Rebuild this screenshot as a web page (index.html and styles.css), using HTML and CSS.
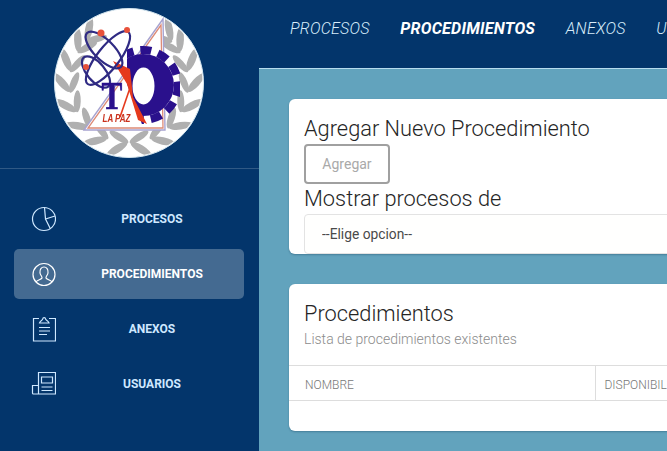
FILE: index.html
```html
<!DOCTYPE html>
<html lang="es">
<head>
<meta charset="utf-8">
<title>Procedimientos</title>
<link rel="stylesheet" href="styles.css">
</head>
<body>
<aside class="sidebar">
  <div class="brand">
    <svg class="logo" viewBox="54 8 150 150" aria-label="Logo La Paz">
      <defs>
        <clipPath id="disc"><circle cx="129" cy="83" r="73.500"/></clipPath>
        <clipPath id="gearclip"><path d="M127 38 H180 V135 H146 L127 84 Z"/></clipPath>
        <g id="leaves">
          <ellipse cx="117" cy="149" rx="12" ry="3.800" transform="rotate(-32 117 149)"/>
          <ellipse cx="119" cy="137" rx="11" ry="3.500" transform="rotate(32 119 137)"/>
        </g>
        <g id="laurel" fill="#b0b0b0">
          <use href="#leaves" transform="rotate(0 129 83)"/>
          <use href="#leaves" transform="rotate(20 129 83)"/>
          <use href="#leaves" transform="rotate(40 129 83)"/>
          <use href="#leaves" transform="rotate(60 129 83)"/>
          <use href="#leaves" transform="rotate(80 129 83)"/>
          <use href="#leaves" transform="rotate(100 129 83)"/>
          <use href="#leaves" transform="rotate(120 129 83)"/>
          <use href="#leaves" transform="rotate(133 129 83)"/>
        </g>
      </defs>
      <circle cx="129" cy="83" r="74.500" fill="#fff" stroke="#d5e6ef" stroke-width="1"/>
      <g clip-path="url(#disc)">
        <use href="#laurel"/>
        <use href="#laurel" transform="translate(258 0) scale(-1 1)"/>
      </g>
      <path d="M163 19 L165 130 L84 130 Z" fill="#fff" stroke="#a7a3d0" stroke-width="1.400"/>
      <path d="M161 25 L163 128 L88 128 Z" fill="#fff" stroke="#dd8a76" stroke-width="1.300"/>
      <g clip-path="url(#gearclip)">
        <circle cx="143" cy="85" r="31" fill="#2a108c"/>
        <circle cx="143" cy="85" r="35" fill="none" stroke="#2a108c" stroke-width="8" stroke-dasharray="11 7"/>
      </g>
      <ellipse cx="143.500" cy="86" rx="11" ry="18.500" fill="#fff"/>
      <path d="M113 61 L130 69 L133 97 L147 124 L138 120 L127 84 Z" fill="#e5391d"/>
      <path d="M130 88 L120 117" stroke="#e5391d" stroke-width="1.600" fill="none"/>
      <g fill="none" stroke="#2f2a83" stroke-width="2.200">
        <ellipse cx="104" cy="50" rx="24" ry="10" transform="rotate(45 104 50)"/>
        <ellipse cx="108" cy="58" rx="33" ry="11" transform="rotate(-52 108 58)"/>
        <ellipse cx="96" cy="72" rx="19" ry="9" transform="rotate(50 96 72)"/>
      </g>
      <circle cx="101" cy="33" r="3.500" fill="#e8513a"/>
      <circle cx="127" cy="30" r="3" fill="#e8513a"/>
      <circle cx="86" cy="67" r="3" fill="#e8513a"/>
      <text class="logo-t" transform="translate(112 109) scale(0.78 1)" text-anchor="middle">T</text>
      <text class="logo-paz" transform="translate(116.500 122) scale(0.8 1)" text-anchor="middle">LA PAZ</text>
    </svg>
  </div>
  <nav class="side-nav">
    <a class="side-item">
      <svg class="side-icon" viewBox="0 0 26 26"><circle cx="14" cy="13" r="11.500"/><path d="M14.500 1.500 L15.500 13 L25 10 M15.500 13 L20.500 23"/></svg>
      <span class="side-label">PROCESOS</span>
    </a>
    <a class="side-item active">
      <svg class="side-icon" viewBox="0 0 26 26"><circle cx="14" cy="13.500" r="11"/><path d="M6 21 C7 19 11.500 18.500 12 17 C12.300 15.500 10.500 14.500 10 12 C9.500 8.500 11.500 6 14 6 S18.500 8.500 18 12 C17.500 14.500 15.700 15.500 16 17 C16.500 18.500 21 19 22 21"/></svg>
      <span class="side-label">PROCEDIMIENTOS</span>
    </a>
    <a class="side-item">
      <svg class="side-icon" viewBox="0 0 26 26"><path d="M9 2.500 H3.500 V25 H25.500 V2.500 H19"/><path d="M9.500 7 H19 C18.500 5 16.500 4.500 15.800 3.500 C15.300 1 13 1 12.500 3.500 C11.800 4.500 10 5 9.500 7 Z"/><path d="M9 11.500 H20 M9 15 H20 M9 18.500 H17"/></svg>
      <span class="side-label">ANEXOS</span>
    </a>
    <a class="side-item">
      <svg class="side-icon" viewBox="0 0 26 26"><path d="M8.500 14.500 V1.500 H25.500 V23 H3.500 C2.800 23 2.500 22.500 2.500 22 V14.500 H8.500 V23"/><path d="M11.500 6 H22.500 V12 H11.500 Z"/><path d="M11.500 16 H22.500 M11.500 19.500 H22.500"/></svg>
      <span class="side-label">USUARIOS</span>
    </a>
  </nav>
</aside>
<div class="main">
  <header class="topbar">
    <a class="top-link">PROCESOS</a>
    <a class="top-link current">PROCEDIMIENTOS</a>
    <a class="top-link">ANEXOS</a>
    <a class="top-link">USUARIOS</a>
  </header>
  <main class="content">
    <section class="card card-form">
      <h2 class="card-title">Agregar Nuevo Procedimiento</h2>
      <button class="btn" type="button">Agregar</button>
      <h2 class="card-title">Mostrar procesos de</h2>
      <select class="field"><option>--Elige opcion--</option></select>
    </section>
    <section class="card card-list">
      <div class="card-head">
        <h2 class="card-title">Procedimientos</h2>
        <p class="card-sub">Lista de procedimientos existentes</p>
      </div>
      <table class="table">
        <thead><tr><th class="col-name">NOMBRE</th><th>DISPONIBILIDAD</th></tr></thead>
      </table>
    </section>
  </main>
</div>
</body>
</html>
```

FILE: styles.css
```css
* { box-sizing: border-box; }
html, body { height: 100%; }
body {
  margin: 0;
  display: flex;
  overflow: hidden;
  font-family: Roboto, "Liberation Sans", sans-serif;
  background: #62a3bd;
}
.sidebar {
  flex: 0 0 259px;
  height: 100vh;
  background: #03356b;
}
.brand {
  height: 169px;
  padding: 8px 0 0 54px;
  display: flex;
  align-items: flex-start;
  border-bottom: 1px solid rgba(255, 255, 255, 0.18);
}
.logo { width: 150px; height: 150px; display: block; filter: blur(0.45px); }
.logo-t { font-family: "Liberation Serif", serif; font-weight: 700; font-size: 40px; fill: #2a108c; stroke: #2a108c; stroke-width: 0.600; }
.logo-paz { font-family: "Liberation Sans", sans-serif; font-style: italic; font-weight: 700; font-size: 10px; fill: #c9301c; }
.side-nav {
  padding: 25px 15px 0 14px;
  display: flex;
  flex-direction: column;
  gap: 5px;
}
.side-item {
  height: 50px;
  padding-left: 16px;
  display: flex;
  align-items: center;
  border-radius: 5px;
  color: #cfe8ff;
}
.side-item.active { background: #446a91; color: #fff; }
.side-icon {
  flex: 0 0 26px;
  width: 26px;
  height: 26px;
  fill: none;
  stroke: #cfe8ff;
  stroke-width: 1.200;
}
.side-item.active .side-icon { stroke: #fff; }
.side-label {
  flex: 1;
  margin-left: 4px;
  text-align: center;
  font-size: 12px;
  font-weight: 700;
}
.main { flex: 1; min-width: 0; display: flex; flex-direction: column; }
.topbar {
  height: 69px;
  flex: none;
  padding: 0 0 12px 31px;
  display: flex;
  align-items: center;
  gap: 30.500px;
  white-space: nowrap;
  overflow: hidden;
  background: #03356b;
  border-bottom: 1px solid #b6dcee;
}
.top-link {
  font-size: 16px;
  font-style: italic;
  font-weight: 300;
  letter-spacing: 0.25px;
  color: #d8edfb;
}
.top-link.current { font-weight: 700; color: #fff; }
.content {
  flex: 1;
  padding: 30px 0 0 30px;
  display: flex;
  flex-direction: column;
  gap: 30px;
  overflow: hidden;
}
.card {
  flex: none;
  width: 640px;
  background: #fff;
  border-radius: 6px;
  overflow: hidden;
  box-shadow: 0 1px 2px rgba(0, 40, 70, 0.3);
}
.card-form { height: 155px; padding: 15px 15px 0; }
.card-list { height: 147px; }
.card-head { height: 81px; padding: 15px 15px 0; }
.card-title {
  margin: 0;
  font-size: 21.800px;
  font-weight: 300;
  line-height: 30px;
  color: #252525;
}
.btn {
  display: block;
  width: 86px;
  height: 40px;
  padding: 0;
  font: 400 14px Roboto, sans-serif;
  color: #a9a9a9;
  background: #fff;
  border: 2px solid #a0a0a0;
  border-radius: 4px;
}
.field {
  display: block;
  width: 100%;
  height: 40px;
  padding: 0 17px;
  appearance: none;
  font: 400 13.800px Roboto, sans-serif;
  color: #4a4a4a;
  background: #fffffe;
  border: 1px solid #e3e3e3;
  border-radius: 4px;
}
.card-sub {
  margin: 0;
  font-size: 14px;
  font-weight: 300;
  line-height: 20px;
  color: #8c8c8c;
}
.table { width: 100%; border-collapse: collapse; table-layout: fixed; }
.table th {
  height: 35px;
  padding: 3px 9px 0;
  text-align: left;
  font-size: 12px;
  font-weight: 300;
  color: #777;
  border-top: 1px solid #ddd;
  border-bottom: 1px solid #ddd;
  white-space: nowrap;
}
.table .col-name { width: 306px; padding-left: 16px; border-right: 1px solid #ddd; }
```
